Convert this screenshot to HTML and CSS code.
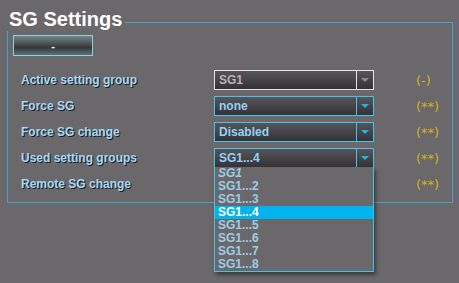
FILE: index.html
```html
<!DOCTYPE html>
<html>
<head>
	<title>SG Settings</title>
	<link rel="stylesheet" href="styles.css">
</head>
<body>
	<div class="panel">
		<div class="head">
			<h1 class="title">SG Settings</h1>
			<div class="rule"></div>
		</div>
		<div class="body">
			<button class="btn">-</button>
			<div class="rows">
				<div class="row">
					<span class="label">Active setting group</span>
					<div class="select disabled"><span class="value">SG1</span><span class="arrow"></span></div>
					<span class="note">(-)</span>
				</div>
				<div class="row">
					<span class="label">Force SG</span>
					<div class="select"><span class="value">none</span><span class="arrow"></span></div>
					<span class="note">(**)</span>
				</div>
				<div class="row">
					<span class="label">Force SG change</span>
					<div class="select"><span class="value">Disabled</span><span class="arrow"></span></div>
					<span class="note">(**)</span>
				</div>
				<div class="row">
					<span class="label">Used setting groups</span>
					<div class="select open"><span class="value">SG1...4</span><span class="arrow"></span>
						<ul class="list">
							<li class="italic">SG1</li>
							<li>SG1...2</li>
							<li>SG1...3</li>
							<li class="selected">SG1...4</li>
							<li>SG1...5</li>
							<li>SG1...6</li>
							<li>SG1...7</li>
							<li>SG1...8</li>
						</ul>
					</div>
					<span class="note">(**)</span>
				</div>
				<div class="row">
					<span class="label">Remote SG change</span>
					<span></span>
					<span class="note">(**)</span>
				</div>
			</div>
		</div>
	</div>
</body>
</html>
```
FILE: styles.css
```css
html, body {
	min-height: 283px;
}
body {
	margin: 0;
	background-color: #6a686b;
	font-family: "Liberation Sans", Arial, sans-serif;
}
.panel {
	margin-left: 7px;
	width: 446px;
}
.head {
	display: flex;
	height: 31px;
}
.title {
	margin: 0 0 0 2px;
	padding-top: 7px;
	font-size: 20px;
	line-height: 24px;
	font-weight: bold;
	color: #fff;
}
.rule {
	flex: 1;
	margin: 22px 0 0 3px;
	border-top: 1px solid #42a4d4;
	border-right: 1px solid #42a4d4;
}
.body {
	border: 1px solid #42a4d4;
	border-top: none;
	padding: 4px 0 5px 0;
}
.btn {
	display: block;
	margin-left: 5px;
	width: 80px;
	height: 21px;
	padding: 0;
	border: 1px solid #8ad2de;
	background: linear-gradient(#72868b 0%, #474b4d 45%, #34363a 60%, #5e7177 100%);
	color: #fff;
	font-family: "Liberation Sans", Arial, sans-serif;
	font-size: 11px;
	font-weight: bold;
}
.rows {
	margin-top: 11px;
	padding-left: 13px;
}
.row {
	display: grid;
	grid-template-columns: 193px 160px 1fr;
	align-items: center;
	height: 26px;
}
.label {
	font-size: 12px;
	font-weight: bold;
	color: #a6d8f4;
	text-shadow: 1px 1px 0 #1c1c1e;
}
.note {
	margin-left: 42px;
	font-family: "DejaVu Sans", sans-serif;
	font-size: 13px;
	color: #cbb421;
}
.select {
	position: relative;
	display: flex;
	height: 20px;
	box-sizing: border-box;
	border: 1px solid #44c4e6;
	background: linear-gradient(#57555a, #343236);
}
.value {
	flex: 1;
	padding-left: 4px;
	font-size: 12px;
	font-weight: bold;
	line-height: 18px;
	color: #92d2f2;
}
.arrow {
	position: relative;
	width: 16px;
	border-left: 1px solid #44c4e6;
}
.arrow::after {
	content: "";
	position: absolute;
	left: 4px;
	top: 7px;
	border-left: 4px solid transparent;
	border-right: 4px solid transparent;
	border-top: 4px solid #1eb4ea;
}
.select.disabled {
	border-color: #e6e6e6;
}
.select.disabled .value {
	color: #b4b4b4;
}
.select.disabled .arrow {
	border-left-color: #e6e6e6;
}
.select.disabled .arrow::after {
	border-top-color: #8c8c8c;
}
.list {
	position: absolute;
	top: 100%;
	left: -1px;
	right: -1px;
	z-index: 2;
	margin: 0;
	padding: 0;
	list-style: none;
	background-color: #6a686b;
	border: 1px solid #44c4e6;
	border-top: none;
	box-shadow: 2px 3px 4px rgba(0,0,0,0.45);
}
.list li {
	height: 13px;
	padding-left: 3px;
	font-size: 12px;
	font-weight: bold;
	line-height: 13px;
	color: #9ccde6;
}
.list li.italic {
	font-style: italic;
}
.list li.selected {
	background-color: #00b4ee;
	color: #fff;
}
```
